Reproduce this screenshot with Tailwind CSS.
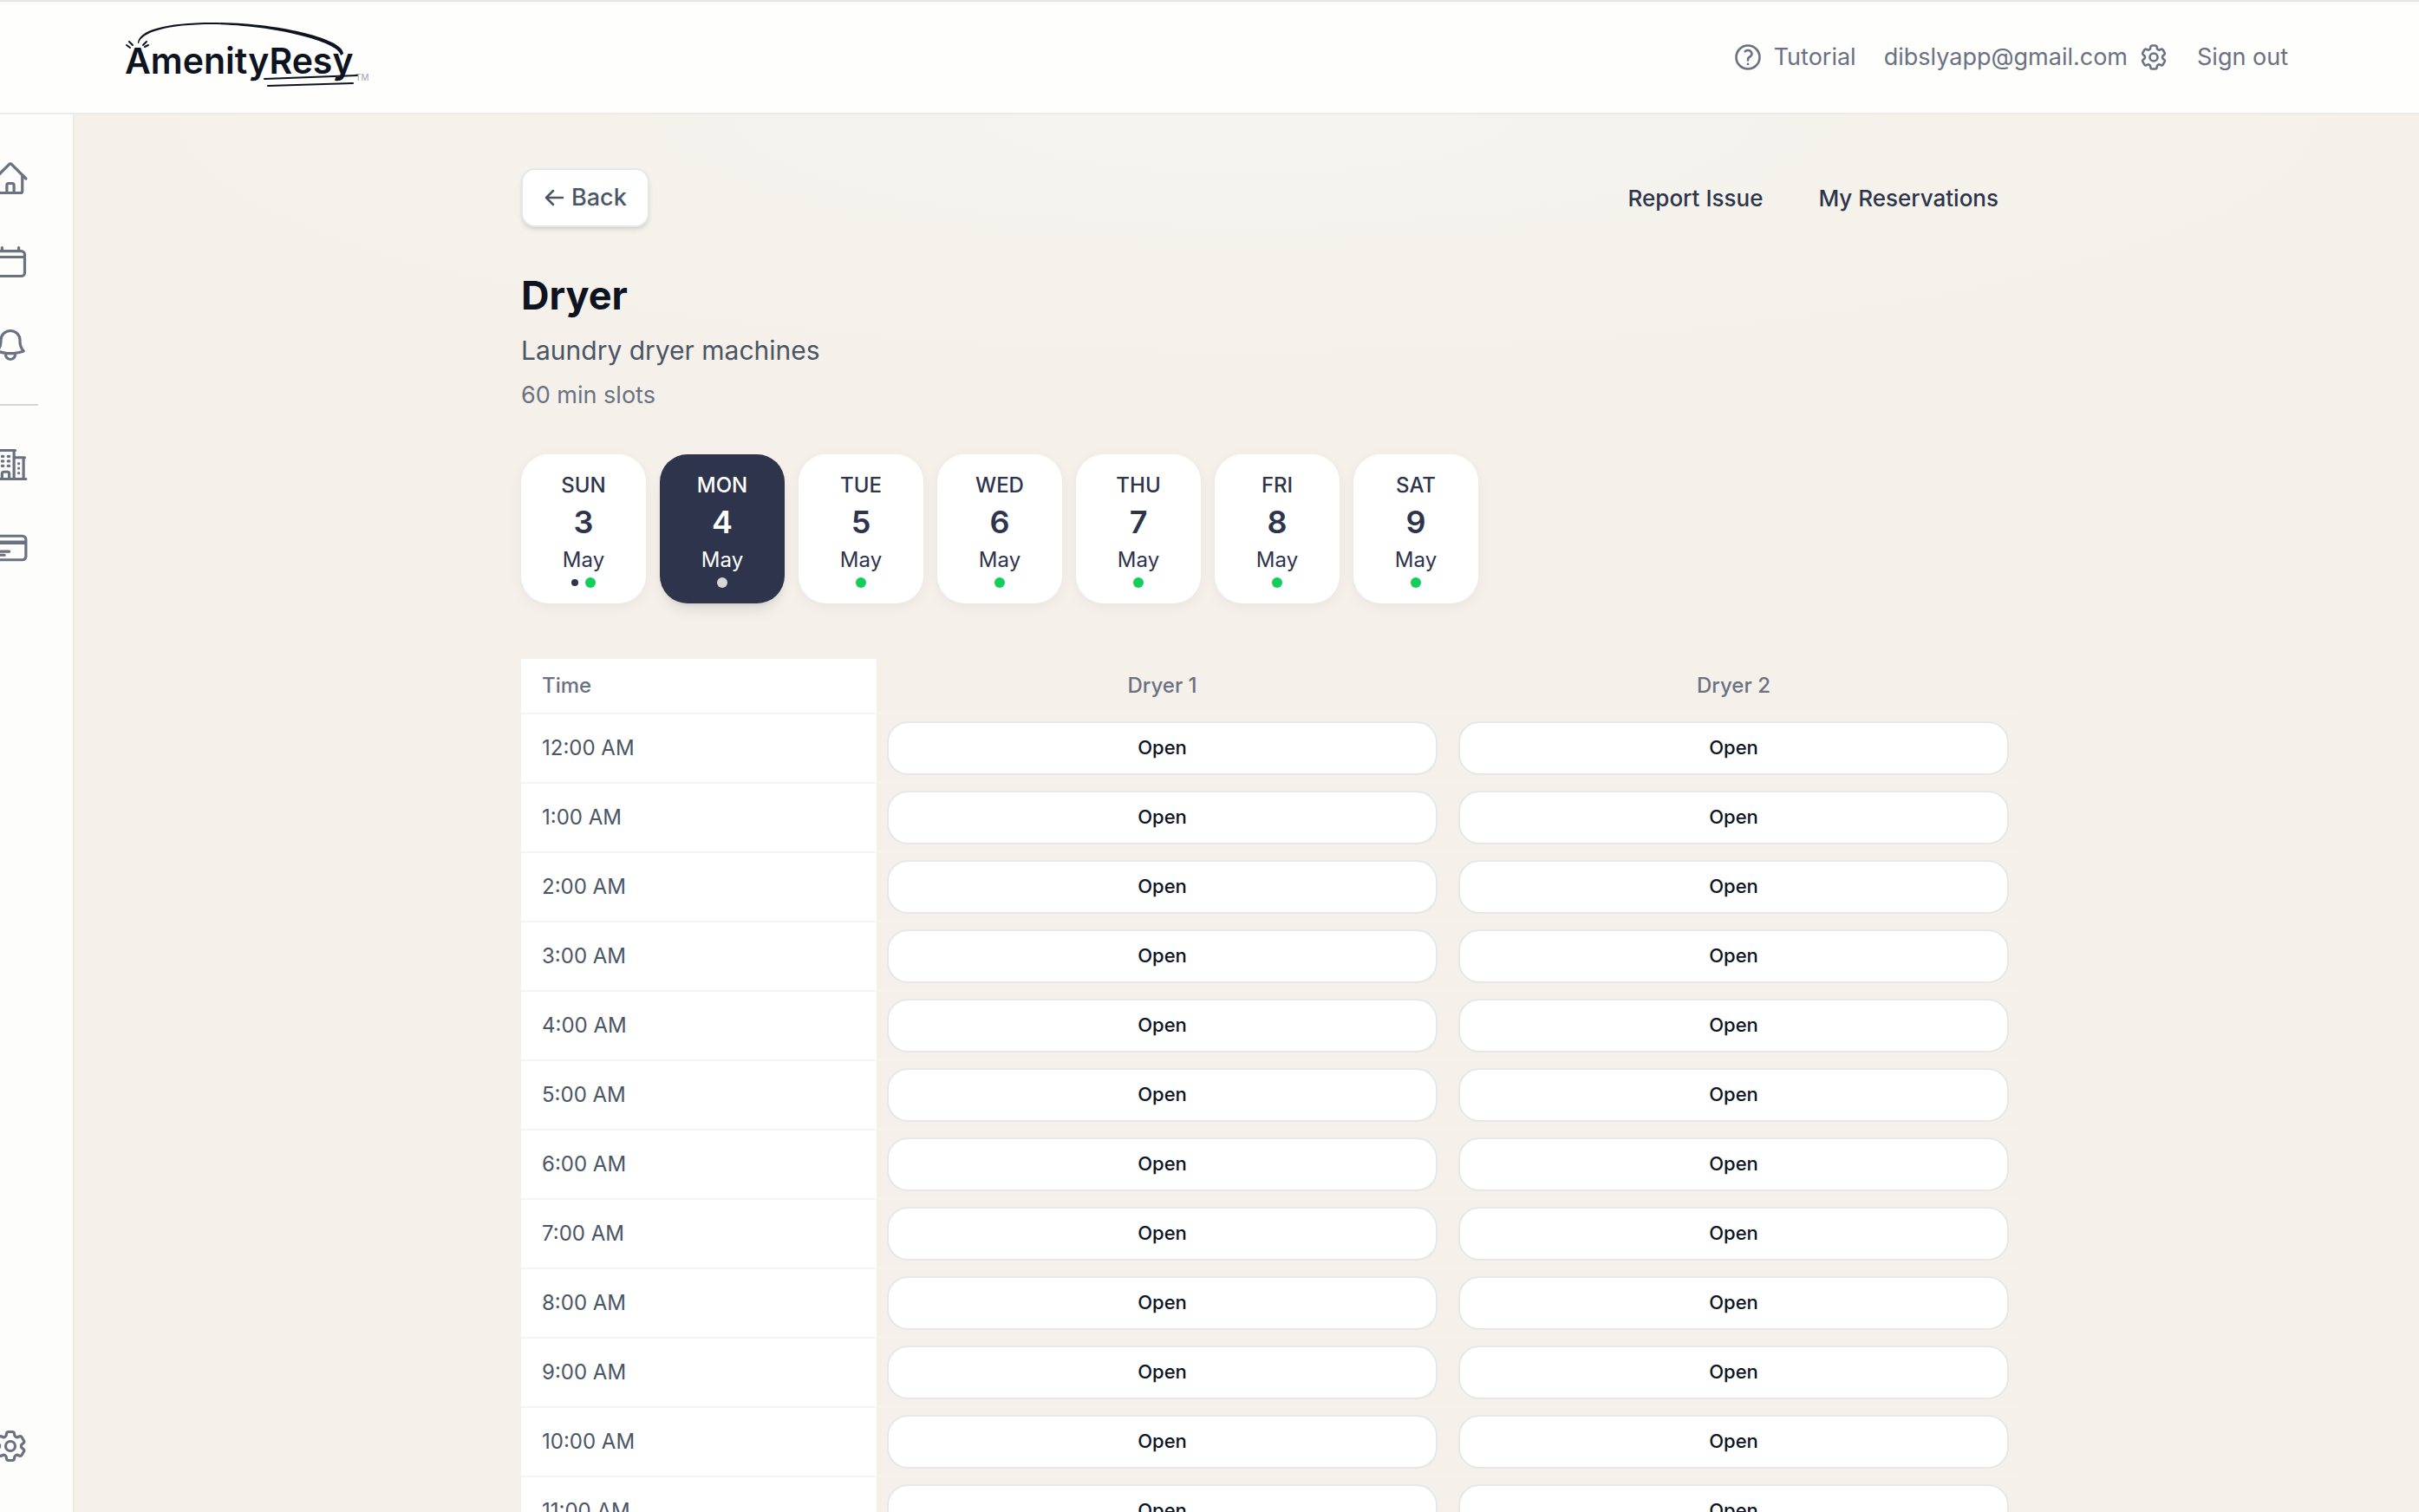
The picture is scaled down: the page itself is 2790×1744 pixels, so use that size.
<!DOCTYPE html>
<html lang="en">
<head>
  <meta charset="UTF-8">
  <meta name="viewport" content="width=device-width, initial-scale=1.0">
  <title>AmenityResy</title>
  <script src="https://cdn.jsdelivr.net/npm/@tailwindcss/browser@4"></script>
</head>
<body class="h-screen flex flex-col overflow-hidden bg-[#f5f1eb] font-['Inter',sans-serif] text-gray-500">
  <!-- Header -->
  <header class="shrink-0 h-[132px] bg-[#fefefc] border-t-2 border-t-gray-200 border-b-2 border-b-[#eeebe6]">
    <div class="max-w-[2560px] h-full mx-auto pl-6 pr-9 flex items-center justify-between">
      <a href="#" aria-label="AmenityResy">
        <svg class="w-[290px] h-[90px] text-[#0d1321]" viewBox="140 21 290 90" fill="none" stroke="currentColor" stroke-linecap="round">
          <text x="145" y="85" font-size="41" font-weight="600" fill="currentColor" stroke="none">AmenityResy</text>
          <path d="M160 50C160 35 192 26 246 26C322 26 398 45 397 62L394 64C394 49 320 29 246 28C194 28 164 37 161 50Z" fill="currentColor" stroke="none"/>
          <path d="M147 52l4 3M150 48l4 4M166 52l4-4M168 54l4-2" stroke-width="2"/>
          <path d="M306 91l107-4" stroke-width="2"/>
          <path d="M310 99l98-3" stroke-width="2"/>
          <text x="411" y="93" font-size="10" fill="#9ca3af" stroke="none">TM</text>
        </svg>
      </a>
      <nav class="flex items-center gap-8 text-[27px]">
        <a href="#" class="flex items-center gap-3">
          <svg class="size-9" viewBox="0 0 24 24" fill="none" stroke="currentColor" stroke-width="1.75" stroke-linecap="round" stroke-linejoin="round"><path d="M9.879 7.519c1.171-1.025 3.071-1.025 4.242 0 1.172 1.025 1.172 2.687 0 3.712-.203.179-.43.326-.67.442-.745.361-1.45.999-1.45 1.827v.75M21 12a9 9 0 1 1-18 0 9 9 0 0 1 18 0Zm-9 5.25h.008v.008H12v-.008Z"/></svg>
          Tutorial
        </a>
        <a href="#" class="flex items-center gap-3">
          dibslyapp@gmail.com
          <svg class="size-9" viewBox="0 0 24 24" fill="none" stroke="currentColor" stroke-width="1.75" stroke-linecap="round" stroke-linejoin="round"><path d="M9.594 3.94c.09-.542.56-.94 1.11-.94h2.593c.55 0 1.02.398 1.11.94l.213 1.281c.063.374.313.686.645.87.074.04.147.083.22.127.325.196.72.257 1.075.124l1.217-.456a1.125 1.125 0 0 1 1.37.49l1.296 2.247a1.125 1.125 0 0 1-.26 1.431l-1.003.827c-.293.241-.438.613-.43.992a7.723 7.723 0 0 1 0 .255c-.008.378.137.75.43.991l1.004.827c.424.35.534.955.26 1.43l-1.298 2.247a1.125 1.125 0 0 1-1.369.491l-1.217-.456c-.355-.133-.75-.072-1.076.124a6.47 6.47 0 0 1-.22.128c-.331.183-.581.495-.644.869l-.213 1.281c-.09.543-.56.94-1.11.94h-2.594c-.55 0-1.019-.398-1.11-.94l-.213-1.281c-.062-.374-.312-.686-.644-.87a6.52 6.52 0 0 1-.22-.127c-.325-.196-.72-.257-1.076-.124l-1.217.456a1.125 1.125 0 0 1-1.369-.49l-1.297-2.247a1.125 1.125 0 0 1 .26-1.431l1.004-.827c.292-.24.437-.613.43-.991a6.932 6.932 0 0 1 0-.255c.007-.38-.138-.751-.43-.992l-1.004-.827a1.125 1.125 0 0 1-.26-1.43l1.297-2.247a1.125 1.125 0 0 1 1.37-.491l1.216.456c.356.133.751.072 1.076-.124.072-.044.146-.086.22-.128.332-.183.582-.495.644-.869l.214-1.28Z"/><path d="M15 12a3 3 0 1 1-6 0 3 3 0 0 1 6 0Z"/></svg>
        </a>
        <button type="button">Sign out</button>
      </nav>
    </div>
  </header>

  <div class="flex-1 min-h-0 flex">
    <!-- Sidebar, partly slid off the left edge -->
    <aside class="shrink-0 w-[86px] bg-[#fdfdfb] border-r-2 border-[#eeebe6] overflow-hidden">
      <nav class="-ml-7 w-20 h-full flex flex-col items-center gap-4 pt-[34px] pb-9">
        <a href="#" aria-label="Home" class="size-20 grid place-items-center">
          <svg class="size-11" viewBox="0 0 24 24" fill="none" stroke="currentColor" stroke-width="1.75" stroke-linecap="round" stroke-linejoin="round"><path d="m2.25 12 8.954-8.955c.44-.439 1.152-.439 1.591 0L21.75 12M4.5 9.75v10.125c0 .621.504 1.125 1.125 1.125H9.75v-4.875c0-.621.504-1.125 1.125-1.125h2.25c.621 0 1.125.504 1.125 1.125V21h4.125c.621 0 1.125-.504 1.125-1.125V9.75M8.25 21h8.25"/></svg>
        </a>
        <a href="#" aria-label="Calendar" class="size-20 grid place-items-center">
          <svg class="size-11" viewBox="0 0 24 24" fill="none" stroke="currentColor" stroke-width="1.75" stroke-linecap="round" stroke-linejoin="round"><path d="M6.75 3v2.25M17.25 3v2.25M3 18.75V7.5a2.25 2.25 0 0 1 2.25-2.25h13.5A2.25 2.25 0 0 1 21 7.5v11.25A2.25 2.25 0 0 1 18.75 21H5.25A2.25 2.25 0 0 1 3 18.75ZM3 9h18"/></svg>
        </a>
        <a href="#" aria-label="Notifications" class="size-20 grid place-items-center">
          <svg class="size-11" viewBox="0 0 24 24" fill="none" stroke="currentColor" stroke-width="1.75" stroke-linecap="round" stroke-linejoin="round"><path d="M14.857 17.082a23.848 23.848 0 0 0 5.454-1.31A8.967 8.967 0 0 1 18 9.75V9A6 6 0 0 0 6 9v.75a8.967 8.967 0 0 1-2.312 6.022c1.733.64 3.56 1.085 5.455 1.31m5.714 0a24.255 24.255 0 0 1-5.714 0m5.714 0a3 3 0 1 1-5.714 0"/></svg>
        </a>
        <hr class="my-3 w-16 shrink-0 border-t-2 border-gray-300">
        <a href="#" aria-label="Buildings" class="size-20 grid place-items-center">
          <svg class="size-11" viewBox="0 0 24 24" fill="none" stroke="currentColor" stroke-width="1.75" stroke-linecap="round" stroke-linejoin="round"><path d="M2.25 21h19.5m-18-18v18m10.5-18v18m6-13.5V21M6.75 6.75h.75m-.75 3h.75m-.75 3h.75m3-6h.75m-.75 3h.75m-.75 3h.75M6.75 21v-3.375c0-.621.504-1.125 1.125-1.125h2.25c.621 0 1.125.504 1.125 1.125V21M3 3h12m-.75 4.5H21m-3.75 3.75h.008v.008h-.008v-.008Zm0 3h.008v.008h-.008v-.008Zm0 3h.008v.008h-.008v-.008Z"/></svg>
        </a>
        <a href="#" aria-label="Billing" class="size-20 grid place-items-center">
          <svg class="size-11" viewBox="0 0 24 24" fill="none" stroke="currentColor" stroke-width="1.75" stroke-linecap="round" stroke-linejoin="round"><path d="M2.25 8.25h19.5M2.25 9h19.5m-16.5 5.25h6m-6 2.25h3m-3.75 3h15a2.25 2.25 0 0 0 2.25-2.25V6.75A2.25 2.25 0 0 0 19.5 4.5h-15a2.25 2.25 0 0 0-2.25 2.25v10.5A2.25 2.25 0 0 0 4.5 19.5Z"/></svg>
        </a>
        <a href="#" aria-label="Settings" class="mt-auto size-20 grid place-items-center">
          <svg class="size-11" viewBox="0 0 24 24" fill="none" stroke="currentColor" stroke-width="1.75" stroke-linecap="round" stroke-linejoin="round"><path d="M9.594 3.94c.09-.542.56-.94 1.11-.94h2.593c.55 0 1.02.398 1.11.94l.213 1.281c.063.374.313.686.645.87.074.04.147.083.22.127.325.196.72.257 1.075.124l1.217-.456a1.125 1.125 0 0 1 1.37.49l1.296 2.247a1.125 1.125 0 0 1-.26 1.431l-1.003.827c-.293.241-.438.613-.43.992a7.723 7.723 0 0 1 0 .255c-.008.378.137.75.43.991l1.004.827c.424.35.534.955.26 1.43l-1.298 2.247a1.125 1.125 0 0 1-1.369.491l-1.217-.456c-.355-.133-.75-.072-1.076.124a6.47 6.47 0 0 1-.22.128c-.331.183-.581.495-.644.869l-.213 1.281c-.09.543-.56.94-1.11.94h-2.594c-.55 0-1.019-.398-1.11-.94l-.213-1.281c-.062-.374-.312-.686-.644-.87a6.52 6.52 0 0 1-.22-.127c-.325-.196-.72-.257-1.076-.124l-1.217.456a1.125 1.125 0 0 1-1.369-.49l-1.297-2.247a1.125 1.125 0 0 1 .26-1.431l1.004-.827c.292-.24.437-.613.43-.991a6.932 6.932 0 0 1 0-.255c.007-.38-.138-.751-.43-.992l-1.004-.827a1.125 1.125 0 0 1-.26-1.43l1.297-2.247a1.125 1.125 0 0 1 1.37-.491l1.216.456c.356.133.751.072 1.076-.124.072-.044.146-.086.22-.128.332-.183.582-.495.644-.869l.214-1.28Z"/><path d="M15 12a3 3 0 1 1-6 0 3 3 0 0 1 6 0Z"/></svg>
        </a>
      </nav>
    </aside>

    <main class="flex-1 min-w-0 overflow-y-auto [scrollbar-width:none] pl-[54px] bg-[radial-gradient(ellipse_50%_300px_at_50%_0,#f5f4ef,#f5f1ea)]">
      <div class="max-w-[1792px] mx-auto px-8 pt-[62px]">
        <div class="flex items-center justify-between">
          <button type="button" class="h-[68px] px-6 flex items-center gap-2 rounded-2xl border-2 border-gray-200 bg-white shadow-md text-[27px] font-medium text-gray-600">
            <svg class="size-6" viewBox="0 0 24 24" fill="none" stroke="currentColor" stroke-width="2.5" stroke-linecap="round" stroke-linejoin="round"><path d="M22 12H3M11 4l-8 8 8 8"/></svg>
            Back
          </button>
          <div class="flex gap-16 pr-6 text-[26px] font-medium text-[#2d344b]">
            <a href="#">Report Issue</a>
            <a href="#">My Reservations</a>
          </div>
        </div>

        <h1 class="mt-12 text-[45px] leading-[62px] font-bold text-[#0d1321]">Dryer</h1>
        <p class="mt-2 text-3xl leading-[48px] text-gray-600">Laundry dryer machines</p>
        <p class="mt-2 text-[27px] leading-[40px]">60 min slots</p>

        <div id="days" class="mt-12 flex gap-4"></div>

        <table class="mt-16 w-full table-fixed border-collapse text-2xl">
          <thead>
            <tr class="h-[63px] border-b-2 border-[#f4f4f0]">
              <th scope="col" class="w-[410px] bg-white pl-6 text-left font-medium">Time</th>
              <th scope="col" class="font-medium">Dryer 1</th>
              <th scope="col" class="font-medium">Dryer 2</th>
            </tr>
          </thead>
          <tbody id="slots"></tbody>
        </table>
      </div>
    </main>
  </div>

  <script>
    const days = ['SUN', 'MON', 'TUE', 'WED', 'THU', 'FRI', 'SAT'];
    const selected = 1;

    document.getElementById('days').innerHTML = days.map((day, i) => {
      const card = i === selected ? 'bg-[#2d344b] text-white shadow-lg' : 'bg-white text-[#2d344b] shadow-[0_4px_16px_rgba(0,0,0,0.05)]';
      const dot = i === selected ? 'bg-[#d5d8d7]' : 'bg-[#13ce5a]';
      const today = i === 0 ? '<span class="size-2 rounded-full bg-[#2d344b]"></span>' : '';
      return `
        <button type="button" class="w-36 h-[172px] flex flex-col items-center pt-5 rounded-[32px] text-2xl leading-8 ${card}">
          <span class="font-medium">${day}</span>
          <span class="text-4xl leading-[52px] font-semibold">${i + 3}</span>
          <span class="leading-9">May</span>
          <span class="mt-[2px] flex items-center gap-2">${today}<span class="size-3 rounded-full ${dot}"></span></span>
        </button>`;
    }).join('');

    const open = '<button type="button" class="w-full h-[62px] block rounded-3xl border-2 border-gray-200 bg-white text-[22px] font-medium text-[#0d1321]">Open</button>';
    const hours = [12, 1, 2, 3, 4, 5, 6, 7, 8, 9, 10, 11];

    document.getElementById('slots').innerHTML = hours.map(hour => `
      <tr class="h-20 border-b-2 border-[#f4f4f0]">
        <th scope="row" class="bg-white pl-6 text-left font-normal text-gray-600">${hour}:00 AM</th>
        <td class="px-3">${open}</td>
        <td class="px-3">${open}</td>
      </tr>`).join('');
  </script>
</body>
</html>
